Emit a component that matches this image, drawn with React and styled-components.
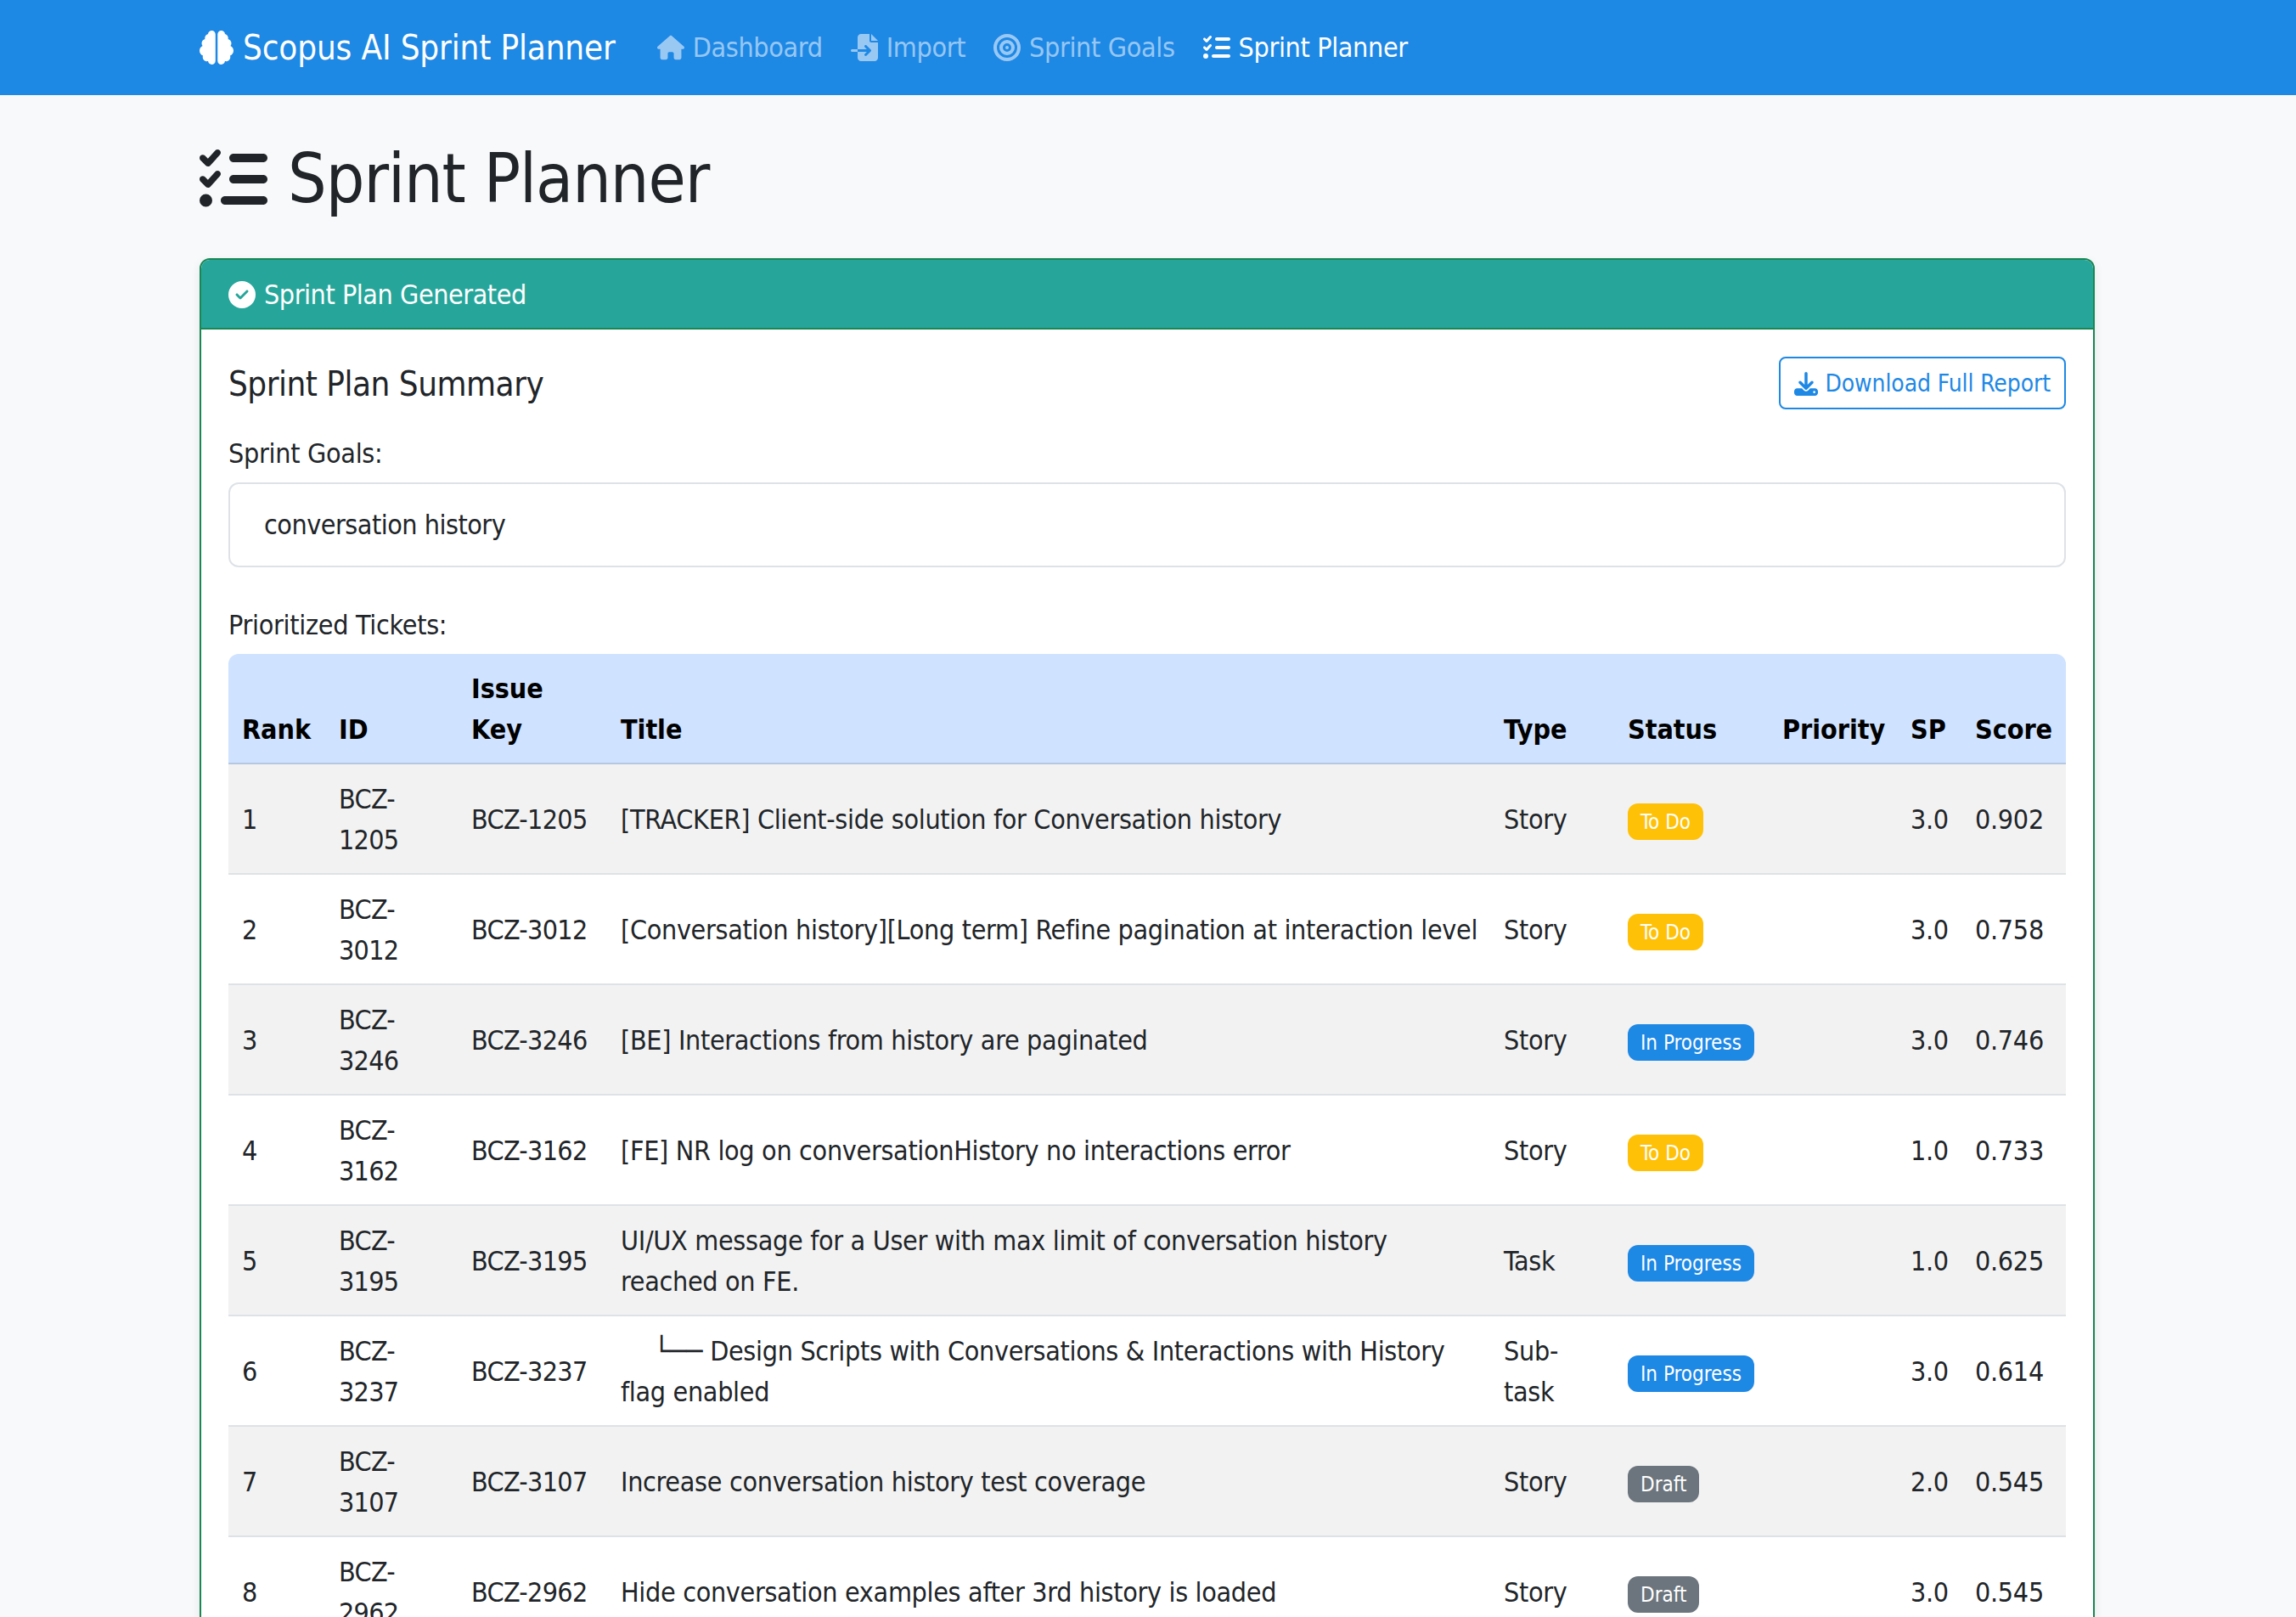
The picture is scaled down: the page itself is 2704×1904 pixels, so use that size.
import React from 'react';
import styled, { createGlobalStyle } from 'styled-components';
import { FaBrain, FaHouse, FaFileImport, FaBullseye, FaListCheck, FaCircleCheck, FaDownload } from 'react-icons/fa6';

const GlobalStyle = createGlobalStyle`
    * {
        box-sizing: border-box;
    }
    html, body {
        margin: 0;
        height: 100%;
        overflow: hidden;
        background: #f8f9fa;
        color: #212529;
        font-family: "DejaVu Sans Condensed", "DejaVu Sans", sans-serif;
        font-size: 32px;
        line-height: 48px;
    }
`;

const Navbar = styled.nav`
    height: 112px;
    background: #1e88e5;
    padding: 0 235px;
    display: flex;
    align-items: center;
`;

const Brand = styled.div`
    display: flex;
    align-items: center;
    gap: 11px;
    color: #fff;
    font-size: 40px;
    letter-spacing: -0.15px;
    margin-right: 49px;
`;

const NavLink = styled.a`
    display: flex;
    align-items: center;
    gap: 10px;
    margin-right: 33px;
    color: ${(props) => (props.$active ? '#fff' : 'rgba(255, 255, 255, 0.55)')};
    font-size: 32px;
    letter-spacing: -0.35px;
`;

const Main = styled.main`
    padding: 51px 237px 0 235px;
`;

const PageTitle = styled.h1`
    display: flex;
    align-items: center;
    gap: 24px;
    margin: 0 0 45px;
    font-size: 80px;
    font-weight: 400;
    line-height: 96px;
    letter-spacing: -1px;
`;

const Card = styled.section`
    background: #fff;
    border: 2px solid #198754;
    border-radius: 12px;
    box-shadow: 0 4px 12px rgba(0, 0, 0, 0.08);
`;

const CardHeader = styled.header`
    display: flex;
    align-items: center;
    gap: 10px;
    height: 82px;
    padding: 2px 32px 0;
    background: #26a69a;
    border-bottom: 2px solid #198754;
    border-radius: 10px 10px 0 0;
    color: #fff;
    letter-spacing: -0.45px;
`;

const CardBody = styled.div`
    padding: 32px;
`;

const SummaryRow = styled.div`
    display: flex;
    justify-content: space-between;
    align-items: center;
    margin-bottom: 28px;
`;

const SummaryTitle = styled.h5`
    margin: 0;
    padding-top: 2px;
    font-size: 40px;
    font-weight: 400;
    line-height: 48px;
    letter-spacing: -0.5px;
`;

const OutlineButton = styled.button`
    display: flex;
    align-items: center;
    gap: 8px;
    height: 62px;
    padding: 2px 16px 0;
    background: transparent;
    border: 2px solid #1e88e5;
    border-radius: 8px;
    color: #1e88e5;
    font: inherit;
    font-size: 28px;
    letter-spacing: -0.1px;
`;

const SectionLabel = styled.p`
    margin: 0 0 10px;
    letter-spacing: -0.3px;
`;

const GoalsBox = styled.div`
    height: 100px;
    margin-bottom: 44px;
    padding: 0 40px;
    display: flex;
    align-items: center;
    border: 2px solid #dee2e6;
    border-radius: 12px;
    letter-spacing: -0.5px;
`;

const TicketTable = styled.table`
    width: 2164px;
    margin-top: 3px;
    table-layout: fixed;
    border-collapse: separate;
    border-spacing: 0;
`;

const HeadCell = styled.th`
    padding: 17px 16px 15px;
    background: #cfe2ff;
    border-bottom: 2px solid #b6c7e0;
    color: #000;
    font-weight: 700;
    text-align: left;
    vertical-align: bottom;
    letter-spacing: -0.05px;

    &:first-child {
        border-top-left-radius: 12px;
    }
    &:last-child {
        border-top-right-radius: 12px;
    }
`;

const BodyRow = styled.tr`
    background: ${(props) => (props.$striped ? '#f2f2f2' : '#fff')};
`;

const Cell = styled.td`
    padding: 17px 16px 15px;
    border-bottom: 2px solid #dee2e6;
    vertical-align: middle;
    letter-spacing: -0.3px;
`;

const KeyCell = styled(Cell)`
    letter-spacing: -0.7px;
`;

const TitleCell = styled(Cell)`
    padding-right: 10px;
    letter-spacing: -0.33px;
`;

const NumberCell = styled(Cell)`
    white-space: nowrap;
`;

const TreeMark = styled.span`
    font-family: "DejaVu Sans Mono", monospace;
    letter-spacing: 0;
`;

const BADGE_COLORS = {
    'To Do': '#ffc107',
    'In Progress': '#1e88e5',
    Draft: '#6c757d',
};

const Badge = styled.span`
    display: inline-block;
    padding: 10px 15px 9px;
    border-radius: 12px;
    background: ${(props) => props.$color};
    color: #fff;
    font-size: 24px;
    line-height: 24px;
    letter-spacing: 0;
    vertical-align: middle;
`;

const COLUMNS = [
    ['Rank', 114],
    ['ID', 156],
    ['Issue Key', 176],
    ['Title', 1040],
    ['Type', 146],
    ['Status', 182],
    ['Priority', 151],
    ['SP', 76],
    ['Score', 123],
];

const TICKETS = [
    { key: 'BCZ-1205', title: '[TRACKER] Client-side solution for Conversation history', type: 'Story', status: 'To Do', sp: '3.0', score: '0.902' },
    { key: 'BCZ-3012', title: '[Conversation history][Long term] Refine pagination at interaction level', type: 'Story', status: 'To Do', sp: '3.0', score: '0.758' },
    { key: 'BCZ-3246', title: '[BE] Interactions from history are paginated', type: 'Story', status: 'In Progress', sp: '3.0', score: '0.746' },
    { key: 'BCZ-3162', title: '[FE] NR log on conversationHistory no interactions error', type: 'Story', status: 'To Do', sp: '1.0', score: '0.733' },
    { key: 'BCZ-3195', title: 'UI/UX message for a User with max limit of conversation history reached on FE.', type: 'Task', status: 'In Progress', sp: '1.0', score: '0.625' },
    { key: 'BCZ-3237', title: 'Design Scripts with Conversations & Interactions with History flag enabled', type: 'Sub-task', status: 'In Progress', sp: '3.0', score: '0.614', child: true },
    { key: 'BCZ-3107', title: 'Increase conversation history test coverage', type: 'Story', status: 'Draft', sp: '2.0', score: '0.545' },
    { key: 'BCZ-2962', title: 'Hide conversation examples after 3rd history is loaded', type: 'Story', status: 'Draft', sp: '3.0', score: '0.545' },
];

function App() {
    return (
        <>
            <GlobalStyle />
            <Navbar>
                <Brand><FaBrain size={40} /> Scopus AI Sprint Planner</Brand>
                <NavLink><FaHouse size={32} /> Dashboard</NavLink>
                <NavLink><FaFileImport size={32} /> Import</NavLink>
                <NavLink><FaBullseye size={32} /> Sprint Goals</NavLink>
                <NavLink $active><FaListCheck size={32} /> Sprint Planner</NavLink>
            </Navbar>
            <Main>
                <PageTitle><FaListCheck size={80} /> Sprint Planner</PageTitle>
                <Card>
                    <CardHeader><FaCircleCheck size={32} /> Sprint Plan Generated</CardHeader>
                    <CardBody>
                        <SummaryRow>
                            <SummaryTitle>Sprint Plan Summary</SummaryTitle>
                            <OutlineButton><FaDownload size={28} /> Download Full Report</OutlineButton>
                        </SummaryRow>
                        <SectionLabel>Sprint Goals:</SectionLabel>
                        <GoalsBox>conversation history</GoalsBox>
                        <SectionLabel>Prioritized Tickets:</SectionLabel>
                        <TicketTable>
                            <colgroup>
                                {COLUMNS.map(([name, width]) => <col key={name} width={width} />)}
                            </colgroup>
                            <thead>
                                <tr>
                                    {COLUMNS.map(([name]) => <HeadCell key={name}>{name}</HeadCell>)}
                                </tr>
                            </thead>
                            <tbody>
                                {TICKETS.map((ticket, index) => (
                                    <BodyRow key={ticket.key} $striped={index % 2 === 0}>
                                        <Cell>{index + 1}</Cell>
                                        <KeyCell>{ticket.key}</KeyCell>
                                        <KeyCell>{ticket.key}</KeyCell>
                                        <TitleCell>
                                            {ticket.child && <><TreeMark>{'\u00a0\u00a0'}└──</TreeMark>{' '}</>}
                                            {ticket.title}
                                        </TitleCell>
                                        <Cell>{ticket.type}</Cell>
                                        <Cell><Badge $color={BADGE_COLORS[ticket.status]}>{ticket.status}</Badge></Cell>
                                        <Cell></Cell>
                                        <NumberCell>{ticket.sp}</NumberCell>
                                        <NumberCell>{ticket.score}</NumberCell>
                                    </BodyRow>
                                ))}
                            </tbody>
                        </TicketTable>
                    </CardBody>
                </Card>
            </Main>
        </>
    );
}

export default App;
